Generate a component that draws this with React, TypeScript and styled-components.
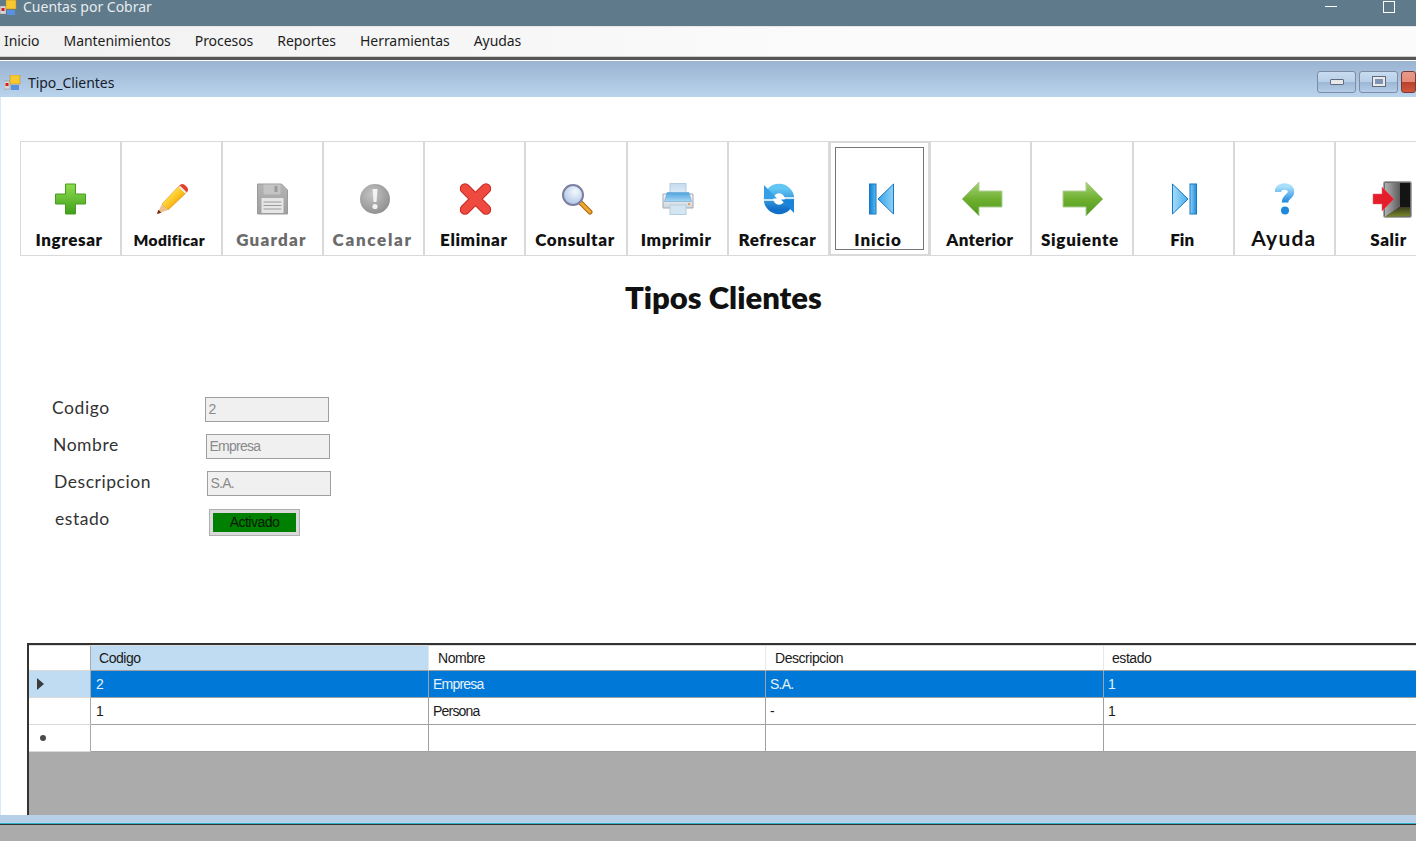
import React from "react";
import styled, { createGlobalStyle } from "styled-components";

const Global = createGlobalStyle`
  html, body { margin: 0; padding: 0; background: #ababab; }
  #root { width: 1416px; height: 841px; }
`;

const Page = styled.div`
  width: 1416px; height: 841px; overflow: hidden;
  display: flex; flex-direction: column;
  background: #ababab;
  font-family: "Noto Sans", sans-serif;
`;
const TitleBar = styled.div`
  height: 26px; flex: none; background: #5f7a8a; color: #e6ecef;
  display: flex; align-items: flex-start; font-size: 14px; line-height: 14px;
`;
const TitleText = styled.span`margin-left: 5px; white-space: nowrap;`;
const WindowControls = styled.div`
  margin-left: auto; display: flex; align-items: flex-start; padding-right: 21px; gap: 46px;
`;
const MinLine = styled.i`display: block; width: 12px; height: 1px; margin-top: 6px; background: #fff;`;
const MaxBox = styled.i`display: block; width: 10px; height: 10px; margin-top: 1px; border: 1px solid #fff;`;
const MenuBar = styled.nav`
  height: 30px; flex: none; display: flex; align-items: center; gap: 24px; padding: 0 0 2px 4px;
  background: linear-gradient(90deg, #f1f1f1, #fbfbfb 60%);
  border-top: 1px solid #e4e6e7; box-sizing: border-box;
  font-size: 14px; color: #1d1d1d;
`;
const MenuItem = styled.span`white-space: nowrap; letter-spacing: -0.05px;`;
const MenuRule = styled.div`
  height: 5px; flex: none; background: #555; border-top: 1px solid #cfcfcf; border-bottom: 1px solid #fff; box-sizing: border-box;
`;
const ChildTitle = styled.div`
  height: 36px; box-sizing: border-box; flex: none; display: flex; align-items: center; padding: 7px 0 0 4px;
  background: linear-gradient(180deg, #99b3d1, #bad4ed);
  font-size: 14px; color: #15202b;
`;
const ChildTitleText = styled.span`margin-left: 6px; letter-spacing: -0.05px;`;
const ChildControls = styled.div`margin-left: auto; display: flex; gap: 3px; align-items: center; margin-top: -2px;`;
const ChildButton = styled.div<{ $danger?: boolean; $narrow?: boolean }>`
  width: ${(p) => (p.$narrow ? 15 : 39)}px; height: 22px; box-sizing: border-box; flex: none;
  border: 1px solid ${(p) => (p.$danger ? "#7a3a3a" : "#7d8ca3")};
  border-radius: 3px;
  background: ${(p) =>
    p.$danger
      ? "linear-gradient(180deg,#e89a8a 0,#e58a78 48%,#b8402a 50%,#d0583c 100%)"
      : "linear-gradient(180deg,#c9dcf0 0,#b8cfe8 48%,#9bb6d4 50%,#b4cde8 100%)"};
  display: flex; align-items: center; justify-content: center;
`;
const MinGlyph = styled.i`display: block; width: 12px; height: 4px; background: #e8e8e8; border: 1px solid #5f6b80; border-radius: 1px;`;
const RestoreGlyph = styled.i`
  display: block; width: 8px; height: 5px; border: 2px solid #eaeaea; outline: 1px solid #5f6b80; background: #7f93b3;
`;
const Body = styled.main`
  flex: 1; min-height: 0; background: #fff; border-left: 1px solid #dde9f7;
  display: flex; flex-direction: column; padding: 44px 0 0 18.5px; overflow: hidden;
`;
const Toolbar = styled.div`display: flex; flex: none;`;
const ToolButton = styled.div<{ $focused?: boolean }>`
  width: 101.2px; height: 115px; box-sizing: border-box; flex: none;
  border: 1px solid #d9d9d9; background: #fff;
  ${(p) => p.$focused && "border-width: 2px; outline: 1px solid #757575; outline-offset: -7px;"}
  display: flex; flex-direction: column; align-items: center; padding-top: ${(p) => (p.$focused ? 39 : 40)}px;
`;
const IconSlot = styled.div<{ $shift: number }>`
  height: 34px; display: flex; align-items: center; justify-content: center; transform: translateX(${(p) => p.$shift}px);
`;
const ToolLabel = styled.span<{ $tone?: string; $size?: number; $weight?: number; $track?: number; $nudge?: number; $lift?: number }>`
  margin-top: ${(p) => 14 - (p.$lift ?? 0)}px; height: 20px; line-height: 20px; white-space: nowrap;
  font-family: Lato, sans-serif; font-weight: ${(p) => p.$weight ?? 800};
  font-size: ${(p) => p.$size ?? 17}px; color: ${(p) => p.$tone ?? "#111"};
  letter-spacing: ${(p) => p.$track ?? 0.6}px;
  transform: translateX(${(p) => p.$nudge ?? -1}px);
`;
const Heading = styled.h1`
  margin: 21px 0 0; padding-left: 605.5px; height: 40px; line-height: 40px; flex: none;
  font-family: Lato, sans-serif; font-weight: 800; font-size: 31px; color: #111; white-space: nowrap;
`;
const Form = styled.section`display: flex; flex-direction: column; gap: 12px; margin: 80px 0 0 32.5px; flex: none;`;
const FormRow = styled.div<{ $indent: number }>`
  display: flex; align-items: center; margin-left: ${(p) => p.$indent}px; height: 25px;
`;
const FieldLabel = styled.label`
  width: 153px; flex: none; font-family: Lato, sans-serif; font-size: 17.5px; color: #333; letter-spacing: 0.55px; margin-top: -5px;
`;
const FieldBox = styled.div`
  width: 124px; height: 25px; box-sizing: border-box; background: #f0f0f0; border: 1.5px solid #9f9f9f;
  padding-left: 2.5px; font: 14px/22px "Liberation Sans", sans-serif; color: #8a8a8a; letter-spacing: -0.75px;
`;
const StatusBox = styled.div`
  width: 91px; height: 27px; box-sizing: border-box; margin: 4px 0 0 1px;
  border: 1px solid #b0b0b0; padding: 3px; background: #d9d9d9;
`;
const StatusFill = styled.div`
  height: 100%; background: #008000; color: #041a04; text-align: center;
  font: 14px/19px "Liberation Sans", sans-serif; letter-spacing: -0.5px;
`;
const DataGrid = styled.section`
  flex: 1; margin: 110px 0 0 7.5px; min-height: 0; overflow: hidden;
  background: #ababab; border-top: 2px solid #333; border-left: 2px solid #333;
  font: 14px "Liberation Sans", sans-serif; color: #1a1a1a;
`;
const GridRow = styled.div<{ $header?: boolean }>`
  display: grid; grid-template-columns: 62px 338px 337px 338px 400px;
  height: ${(p) => (p.$header ? 25 : 27)}px;
`;
const HeaderTop = styled.div`height: 1px; background: #dcdcdc;`;
const Cell = styled.div<{ $selected?: boolean; $header?: boolean; $active?: boolean; $inset?: number }>`
  box-sizing: border-box; padding-left: ${(p) => p.$inset ?? 4}px;
  display: flex; align-items: center;
  background: ${(p) => (p.$active ? "#bfdcf2" : p.$selected ? "#0078d7" : "#fff")};
  color: ${(p) => (p.$selected ? "#e6f2fb" : "#1a1a1a")};
  border-right: 1px solid ${(p) => (p.$header ? "#e8e8e8" : "#a0a0a0")};
  border-bottom: 1px solid #a0a0a0;
  white-space: nowrap;
  letter-spacing: ${(p) => (p.$header ? -0.45 : -0.8)}px;
`;
const RowHead = styled.div<{ $active?: boolean }>`
  box-sizing: border-box; display: flex; align-items: center; padding-left: 8px;
  background: ${(p) => (p.$active ? "#bfdcf2" : "#fff")};
  border-right: 1px solid #a8a8a8; border-bottom: 1px solid #dadada;
`;
const NewRowMark = styled.svg`margin-left: 2px;`;
const Strip = styled.div`
  height: 8px; flex: none; background: #b8cfe8;
  border-bottom: 1px solid #2fb3cc; box-shadow: 0 1px 0 #333;
`;
const Desktop = styled.div`height: 17px; flex: none;`;

const IconSvg: React.FC<{ w?: number; h?: number; children: React.ReactNode }> = ({ w = 32, h = 32, children }) => (
  <svg width={w} height={h} viewBox={`0 0 ${w} ${h}`} aria-hidden="true">{children}</svg>
);

const Grad: React.FC<{ id: string; a: string; b: string; c?: string; h?: boolean }> = ({ id, a, b, c, h }) => (
  <linearGradient id={id} x1="0" y1="0" x2={h ? "1" : "0"} y2={h ? "0" : "1"}>
    <stop offset="0" stopColor={a} />
    {c && <stop offset=".5" stopColor={c} />}
    <stop offset="1" stopColor={b} />
  </linearGradient>
);

const PlusIcon = () => (
  <IconSvg>
    <defs><Grad id="gPlus" a="#8fdc4e" b="#3fa01a" /></defs>
    <path d="M11 1h10v10h10v10H21v10H11V21H1V11h10z" fill="url(#gPlus)" stroke="#4a9a22" />
  </IconSvg>
);
const PencilIcon = () => (
  <IconSvg>
    <defs>
      <linearGradient id="gPen" x1="0.2" y1="0.2" x2="0.8" y2="0.8">
        <stop offset="0" stopColor="#fff06a" />
        <stop offset=".55" stopColor="#fcc41e" />
        <stop offset="1" stopColor="#ee8a10" />
      </linearGradient>
    </defs>
    <path d="M6 21 23 3l7 7-18 17z" fill="url(#gPen)" stroke="#e08c10" strokeWidth=".6" />
    <path d="M24 2c2-2 4-1 6 1s3 4 1 6l-1 1-7-7z" fill="#e2402a" />
    <path d="m23.500 3.500 6.500 6.500" stroke="#ececec" strokeWidth="2" />
    <path d="m6 21 6 6-11 4z" fill="#eec08a" />
    <path d="m1 31 1.300-4.300 3 3z" fill="#6e2410" />
  </IconSvg>
);
const FloppyIcon = () => (
  <IconSvg>
    <defs><Grad id="gFlop" a="#b4b4b4" b="#a0a0a0" /></defs>
    <path d="M1 1h24l6 6v24H1z" fill="url(#gFlop)" stroke="#9a9a9a" />
    <rect x="7" y="1.500" width="17" height="10" fill="#c4c4c4" />
    <rect x="18" y="3" width="3" height="6" fill="#9a9a9a" />
    <rect x="5" y="15" width="22" height="15" fill="#e6e6e6" />
    <path d="M7 19h18M7 22.500h18M7 26h18" stroke="#9c9c9c" />
  </IconSvg>
);
const CancelIcon = () => (
  <IconSvg>
    <defs>
      <radialGradient id="gCan" cx=".4" cy=".35" r=".7"><stop offset="0" stopColor="#c4c4c4" /><stop offset="1" stopColor="#8e8e8e" /></radialGradient>
    </defs>
    <circle cx="16" cy="16" r="15" fill="url(#gCan)" />
    <path d="M13.500 6h5l-1 13h-3z" fill="#f2f2f2" />
    <circle cx="16" cy="23.500" r="2.600" fill="#f2f2f2" />
  </IconSvg>
);
const DeleteIcon = () => (
  <IconSvg>
    <path d="M5.500 5.500 26.500 26.500M26.500 5.500 5.500 26.500" stroke="#c9281f" strokeWidth="10.500" strokeLinecap="round" />
    <path d="M5.500 5.500 26.500 26.500M26.500 5.500 5.500 26.500" stroke="#ee4a3f" strokeWidth="8.500" strokeLinecap="round" />
  </IconSvg>
);
const SearchIcon = () => (
  <IconSvg>
    <defs>
      <radialGradient id="gLens" cx=".6" cy=".35" r=".7"><stop offset="0" stopColor="#f4f8fd" /><stop offset="1" stopColor="#a9c4e6" /></radialGradient>
    </defs>
    <path d="M19 19 29 29" stroke="#a8650f" strokeWidth="5" strokeLinecap="round" />
    <path d="M19.500 19.500 29 29" stroke="#f0a832" strokeWidth="3" strokeLinecap="round" />
    <circle cx="12" cy="12" r="10" fill="url(#gLens)" stroke="#7d7fa0" strokeWidth="2" />
  </IconSvg>
);
const PrintIcon = () => (
  <IconSvg>
    <defs>
      <Grad id="gTray" a="#4fa3e0" b="#a8d6f4" />
      <Grad id="gCase" a="#f6f8fa" b="#cfd6dc" />
      <Grad id="gPa" a="#c4dcf0" b="#e6f0f9" />
    </defs>
    <rect x="8" y="0.500" width="16" height="13" fill="url(#gPa)" stroke="#b4cde0" />
    <path d="M1 11h30v14H1z" fill="url(#gCase)" stroke="#a2aab0" />
    <path d="M5 9.500h22l2.500 9h-27z" fill="url(#gTray)" stroke="#5a9ccf" strokeWidth=".5" />
    <rect x="8" y="22" width="16" height="9.500" fill="#d5e6f3" stroke="#b4cde0" />
    <circle cx="27" cy="21" r="1" fill="#e8862e" />
  </IconSvg>
);
const RefreshIcon = () => (
  <IconSvg>
    <defs><Grad id="gRe" a="#62c6f4" b="#1070c8" /></defs>
    <circle cx="16" cy="16" r="10.500" fill="none" stroke="url(#gRe)" strokeWidth="9.500" />
    <path d="M1 2 14 15.500H1z" fill="#35a0e6" />
    <path d="M31 30 18 16.500h13z" fill="#1a84d8" />
    <path d="M0 17h13l4-2.500M32 15H19l-4 2.500" fill="none" stroke="#fff" strokeWidth="1.400" />
  </IconSvg>
);
const FirstIcon = () => (
  <IconSvg w={26} h={32}>
    <defs>
      <Grad id="gF1" a="#37a4ea" b="#8fd0f6" h />
      <Grad id="gF2" a="#0f80d4" b="#5bb8ef" h />
    </defs>
    <rect x="1" y="1" width="6.500" height="30" fill="url(#gF2)" stroke="#1878c4" />
    <path d="M25 1v30L9.500 16z" fill="url(#gF1)" stroke="#1878c4" />
  </IconSvg>
);
const LastIcon = () => (
  <IconSvg w={26} h={32}>
    <defs>
      <Grad id="gL1" a="#a6dcfa" b="#4aaeea" h />
      <Grad id="gL2" a="#8fd0f6" b="#1f8cda" h />
    </defs>
    <path d="M1 1v30L16.500 16z" fill="url(#gL1)" stroke="#1878c4" />
    <rect x="18.500" y="1" width="6.500" height="30" fill="url(#gL2)" stroke="#1878c4" />
  </IconSvg>
);
const PrevIcon = () => (
  <IconSvg w={42} h={36}>
    <defs><Grad id="gPv" a="#a6d47a" b="#4e9a1c" c="#6fb030" /></defs>
    <path d="M1 18 18 1v9h23v16H18v9z" fill="url(#gPv)" stroke="#b0cf98" />
  </IconSvg>
);
const NextIcon = () => (
  <IconSvg w={42} h={36}>
    <defs><Grad id="gNx" a="#a6d47a" b="#4e9a1c" c="#6fb030" /></defs>
    <path d="M41 18 24 1v9H1v16h23v9z" fill="url(#gNx)" stroke="#b0cf98" />
  </IconSvg>
);
const HelpIcon = () => (
  <IconSvg w={20} h={32}>
    <defs><Grad id="gHp" a="#a8e0fb" b="#1e88dc" /></defs>
    <path d="M3.500 9C3.500 5 7 3.500 10 3.500s6.500 1.500 6.500 5.500c0 4.500-6 4.500-6 10.500" fill="none" stroke="url(#gHp)" strokeWidth="6.500" />
    <circle cx="10.500" cy="27.500" r="4" fill="#1e88dc" />
  </IconSvg>
);
const ExitIcon = () => (
  <IconSvg w={40} h={37}>
    <defs>
      <Grad id="gDoor" a="#b0b0b0" b="#5c5c5c" h />
      <Grad id="gFloor" a="#3a3a1e" b="#7b8a2c" />
    </defs>
    <rect x="12" y="1" width="27" height="35" rx="1" fill="#141414" stroke="#8a8a8a" strokeWidth="1.500" />
    <path d="M13 2h15v24L13 36z" fill="url(#gDoor)" />
    <path d="M13 36 28 26h10v9z" fill="url(#gFloor)" />
    <path d="M1 13h9V6l12 12-12 12v-7H1z" fill="#e41e2a" stroke="#f06068" strokeWidth=".5" />
  </IconSvg>
);

type Tool = {
  label: string; icon: React.ReactNode; tone?: string; size?: number; weight?: number;
  track?: number; nudge?: number; lift?: number; focused?: boolean; shift: number;
};
const tools: Tool[] = [
  { label: "Ingresar", icon: <PlusIcon />, shift: 0.5 },
  { label: "Modificar", icon: <PencilIcon />, size: 15.5, track: 0.4, nudge: -2, shift: 1 },
  { label: "Guardar", icon: <FloppyIcon />, tone: "#6b6b6b", track: 1.2, shift: 0.5 },
  { label: "Cancelar", icon: <CancelIcon />, tone: "#6b6b6b", track: 1.7, shift: 1 },
  { label: "Eliminar", icon: <DeleteIcon />, shift: 0.5 },
  { label: "Consultar", icon: <SearchIcon />, shift: 1 },
  { label: "Imprimir", icon: <PrintIcon />, shift: 1 },
  { label: "Refrescar", icon: <RefreshIcon />, shift: 1 },
  { label: "Inicio", icon: <FirstIcon />, focused: true, track: 0.9, nudge: -1.5, shift: 1.5 },
  { label: "Anterior", icon: <PrevIcon />, track: 0.3, shift: 1 },
  { label: "Siguiente", icon: <NextIcon />, track: 0.7, nudge: -2, shift: 1 },
  { label: "Fin", icon: <LastIcon />, track: 0, shift: 1.5 },
  { label: "Ayuda", icon: <HelpIcon />, size: 21, weight: 700, track: 1.2, nudge: -0.5, lift: 2, shift: 0.5 },
  { label: "Salir", icon: <ExitIcon />, nudge: 3, shift: 6 },
];

const AppIcon = () => (
  <svg width="18" height="16" viewBox="0 0 18 16" aria-hidden="true">
    <rect x="0" y="6" width="6" height="8" fill="#d8d8d8" stroke="#888" strokeWidth=".5" />
    <rect x="1.500" y="8" width="3" height="3" fill="#d02020" />
    <rect x="6" y="0" width="10" height="9" fill="#f8c830" stroke="#b88a20" strokeWidth=".5" />
    <rect x="7" y="10" width="8" height="5" fill="#5a90e0" />
  </svg>
);

const columns = [
  { name: "Codigo", inset: 8 },
  { name: "Nombre", inset: 9 },
  { name: "Descripcion", inset: 9 },
  { name: "estado", inset: 8 },
];
const rows = [
  ["2", "Empresa", "S.A.", "1"],
  ["1", "Persona", "-", "1"],
  ["", "", "", ""],
];
const fields = [
  { label: "Codigo", value: "2" },
  { label: "Nombre", value: "Empresa" },
  { label: "Descripcion", value: "S.A." },
];

export default function App() {
  return (
    <Page>
      <Global />
      <TitleBar>
        <AppIcon />
        <TitleText>Cuentas por Cobrar</TitleText>
        <WindowControls><MinLine /><MaxBox /></WindowControls>
      </TitleBar>
      <MenuBar>
        {["Inicio", "Mantenimientos", "Procesos", "Reportes", "Herramientas", "Ayudas"].map((m) => (
          <MenuItem key={m}>{m}</MenuItem>
        ))}
      </MenuBar>
      <MenuRule />
      <ChildTitle>
        <AppIcon />
        <ChildTitleText>Tipo_Clientes</ChildTitleText>
        <ChildControls>
          <ChildButton><MinGlyph /></ChildButton>
          <ChildButton><RestoreGlyph /></ChildButton>
          <ChildButton $danger $narrow />
        </ChildControls>
      </ChildTitle>
      <Body>
        <Toolbar>
          {tools.map((t) => (
            <ToolButton key={t.label} $focused={t.focused}>
              <IconSlot $shift={t.shift}>{t.icon}</IconSlot>
              <ToolLabel $tone={t.tone} $size={t.size} $weight={t.weight} $track={t.track} $nudge={t.nudge} $lift={t.lift}>
                {t.label}
              </ToolLabel>
            </ToolButton>
          ))}
        </Toolbar>
        <Heading>Tipos Clientes</Heading>
        <Form>
          {fields.map((f, i) => (
            <FormRow key={f.label} $indent={i}>
              <FieldLabel>{f.label}</FieldLabel>
              <FieldBox>{f.value}</FieldBox>
            </FormRow>
          ))}
          <FormRow $indent={3}>
            <FieldLabel>estado</FieldLabel>
            <StatusBox><StatusFill>Activado</StatusFill></StatusBox>
          </FormRow>
        </Form>
        <DataGrid>
          <HeaderTop />
          <GridRow $header>
            <RowHead />
            {columns.map((c, i) => (
              <Cell key={c.name} $header $active={i === 0} $inset={c.inset}>{c.name}</Cell>
            ))}
          </GridRow>
          {rows.map((r, ri) => (
            <GridRow key={ri}>
              <RowHead $active={ri === 0}>
                {ri === 0 && (
                  <svg width="8" height="12" viewBox="0 0 8 12" aria-hidden="true"><path d="M0 0l7 6-7 6z" fill="#3c3c3c" /></svg>
                )}
                {ri === 2 && (
                  <NewRowMark width="8" height="8" viewBox="0 0 8 8" aria-hidden="true"><circle cx="4" cy="4" r="3" fill="#4a4a4a" /></NewRowMark>
                )}
              </RowHead>
              {r.map((v, ci) => (
                <Cell key={ci} $selected={ri === 0} $inset={ci === 0 ? 5 : 4}>{v}</Cell>
              ))}
            </GridRow>
          ))}
        </DataGrid>
      </Body>
      <Strip />
      <Desktop />
    </Page>
  );
}
